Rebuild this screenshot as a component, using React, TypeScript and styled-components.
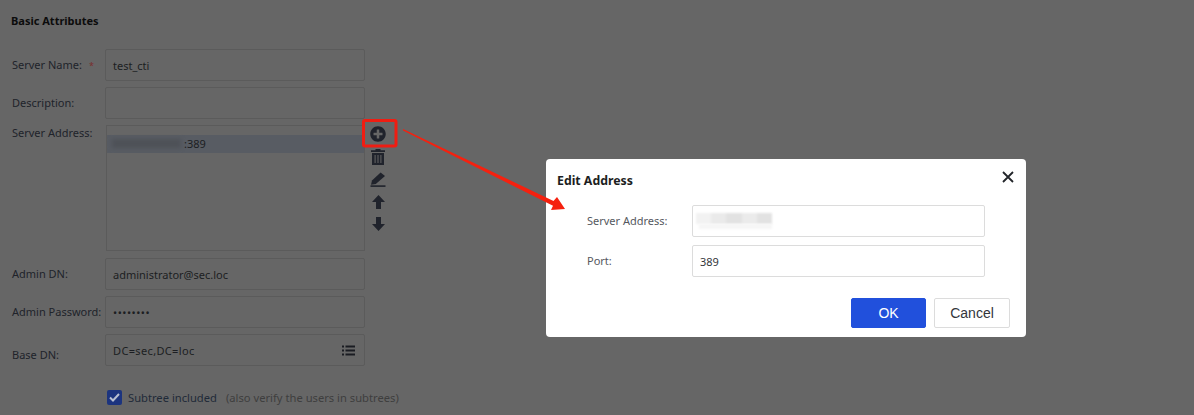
import React from 'react';
import styled, { createGlobalStyle } from 'styled-components';
import { FaPlusCircle } from 'react-icons/fa';

const GlobalStyle = createGlobalStyle`
  html, body {
    margin: 0;
    padding: 0;
    background: #666;
  }
  * {
    box-sizing: border-box;
  }
`;

const Page = styled.div`
  position: relative;
  width: 1194px;
  height: 415px;
  overflow: hidden;
  background: #666;
  color: #20232a;
  font-family: 'Noto Sans', 'Open Sans', sans-serif;
  font-size: 11px;
`;

const Form = styled.div`
  display: flex;
  flex-direction: column;
  padding: 13px 0 0 12px;
`;

const SectionTitle = styled.div`
  margin-left: -1px;
  height: 16px;
  margin-bottom: 20px;
  font-size: 11px;
  line-height: 16px;
  font-weight: 700;
  color: #0c0c0c;
`;

const Row = styled.div<{ $gap?: number }>`
  display: flex;
  margin-bottom: ${({ $gap }) => $gap ?? 6}px;
`;

const Label = styled.div<{ $offset?: number }>`
  width: 93px;
  padding-top: ${({ $offset }) => $offset ?? 8}px;
  line-height: 16px;
  white-space: nowrap;
`;

const Required = styled.span`
  margin-left: 7px;
  font-size: 9px;
  color: #7a2e2e;
`;

const Input = styled.div<{ $spacing?: number }>`
  display: flex;
  align-items: center;
  justify-content: space-between;
  width: 260px;
  height: 32px;
  padding: 0 9px 0 7px;
  border: 1px solid #5b5b5b;
  border-radius: 2px;
  color: #1c1e22;
  font-size: 11px;
  letter-spacing: ${({ $spacing }) => $spacing ?? 0}px;
`;

const ListBox = styled.div`
  width: 259px;
  height: 126px;
  margin-left: 1px;
  padding-top: 9px;
  border: 1px solid #5b5b5b;
`;

const ListItem = styled.div`
  position: relative;
  height: 18px;
  padding-left: 77px;
  background: #585c63;
  line-height: 17px;
  color: #1c1e22;
`;

const Smudge = styled.span`
  position: absolute;
  left: 5px;
  top: 4px;
  width: 69px;
  height: 9px;
  background: #4e5157;
  filter: blur(2px);
`;

const Tools = styled.div`
  display: flex;
  flex-direction: column;
  align-items: center;
  width: 16px;
  margin-left: 5px;
  margin-top: -2px;
  color: #20232c;
`;

const Tool = styled.div`
  display: flex;
  align-items: center;
  justify-content: center;
  width: 16px;
  height: 22.5px;
`;

const CheckRow = styled.div`
  display: flex;
  align-items: center;
  margin: 23px 0 0 95px;
  height: 16px;
`;

const CheckBox = styled.span`
  display: flex;
  align-items: center;
  justify-content: center;
  width: 15px;
  height: 15px;
  border-radius: 2px;
  background: #1c347f;
  color: #b9c0d2;
`;

const CheckText = styled.span`
  margin-left: 6px;
  font-size: 11.2px;
  color: #1f2a38;
`;

const Hint = styled.span`
  margin-left: 9px;
  margin-top: 1px;
  font-size: 11.2px;
  color: #3e3e3e;
`;

const Dialog = styled.div`
  position: absolute;
  left: 546px;
  top: 159px;
  width: 480px;
  height: 178px;
  padding: 12px 16px 0 11px;
  background: #fff;
  border-radius: 4px;
`;

const DialogHeader = styled.div`
  display: flex;
  align-items: center;
  justify-content: space-between;
  height: 18px;
  margin-bottom: 16px;
`;

const DialogTitle = styled.div`
  font-size: 12.3px;
  font-weight: 700;
  color: #1c1e22;
`;

const CloseIcon = styled.svg`
  margin-top: -7px;
  margin-right: -4px;
`;

const DialogRow = styled.div`
  display: flex;
  align-items: center;
  margin-bottom: 8px;
  padding-left: 30px;
`;

const DialogLabel = styled.div`
  width: 105px;
  margin-top: -1px;
  font-size: 11px;
  color: #55585e;
`;

const DialogInput = styled.div`
  position: relative;
  display: flex;
  align-items: center;
  width: 293px;
  height: 32px;
  padding-left: 7px;
  border: 1px solid #dcdcdc;
  border-radius: 2px;
  font-size: 11px;
  color: #33363b;
`;

const BlurredValue = styled.span`
  position: absolute;
  left: 3px;
  top: 7px;
  width: 76px;
  height: 11px;
  background: linear-gradient(
    90deg,
    #f2f2f2 0 20%,
    #eaeaea 20% 40%,
    #e2e2e2 40% 60%,
    #ebebeb 60% 80%,
    #e2e2e2 80% 100%
  );
  filter: blur(1px);
`;

const BlurredTail = styled.span`
  position: absolute;
  left: 6px;
  top: 18px;
  width: 73px;
  height: 5px;
  background: #f6f6f6;
  filter: blur(1px);
`;

const DialogFooter = styled.div`
  display: flex;
  justify-content: flex-end;
  gap: 8px;
  margin-top: 21px;
`;

const Button = styled.div<{ $primary?: boolean }>`
  display: flex;
  align-items: center;
  justify-content: center;
  width: ${({ $primary }) => ($primary ? 75 : 76)}px;
  height: 30px;
  border: 1px solid ${({ $primary }) => ($primary ? '#2150dc' : '#dcdcdc')};
  border-radius: 2px;
  background: ${({ $primary }) => ($primary ? '#2150dc' : '#fff')};
  color: ${({ $primary }) => ($primary ? '#fff' : '#33363b')};
  font-family: 'Liberation Sans', Arial, sans-serif;
  font-size: 14px;
`;

const Annotation = styled.svg`
  position: absolute;
  left: 0;
  top: 0;
  pointer-events: none;
`;

const TrashIcon = () => (
  <svg width="14" height="16" viewBox="0 0 14 16" fill="currentColor">
    <path d="M4.5 0 H9.5 V1.2 H14 V3 H0 V1.2 H4.5 Z" />
    <path
      fillRule="evenodd"
      d="M1 4 H13 V16 H1 Z M3.6 6 V14 H4.6 V6 Z M6.5 6 V14 H7.5 V6 Z M9.4 6 V14 H10.4 V6 Z"
    />
  </svg>
);

const PencilIcon = () => (
  <svg width="16" height="15" viewBox="0 0 16 15" fill="currentColor">
    <path d="M10.6 0.4 L15 4 L5.8 12 L1 12.8 L2 8.4 Z" />
    <rect x="0.5" y="13.3" width="15" height="1.6" />
  </svg>
);

const UpIcon = () => (
  <svg width="13" height="14" viewBox="0 0 13 14" fill="currentColor">
    <path d="M6.5 0 L13 7 H9 V14 H4 V7 H0 Z" />
  </svg>
);

const DownIcon = () => (
  <svg width="13" height="14" viewBox="0 0 13 14" fill="currentColor">
    <path d="M4 0 H9 V7 H13 L6.5 14 L0 7 H4 Z" />
  </svg>
);

const ListIcon = () => (
  <svg width="13" height="11" viewBox="0 0 13 11" fill="#1a1c22">
    <rect x="0" y="0.5" width="2" height="2" />
    <rect x="3.5" y="0.5" width="9.5" height="2" />
    <rect x="0" y="4.5" width="2" height="2" />
    <rect x="3.5" y="4.5" width="9.5" height="2" />
    <rect x="0" y="8.5" width="2" height="2" />
    <rect x="3.5" y="8.5" width="9.5" height="2" />
  </svg>
);

const App: React.FC = () => {
  return (
    <Page>
      <GlobalStyle />
      <Form>
        <SectionTitle>Basic Attributes</SectionTitle>
        <Row>
          <Label>
            Server Name:<Required>*</Required>
          </Label>
          <Input>test_cti</Input>
        </Row>
        <Row>
          <Label>Description:</Label>
          <Input />
        </Row>
        <Row $gap={7}>
          <Label $offset={0}>Server Address:</Label>
          <ListBox>
            <ListItem>
              <Smudge />
              :389
            </ListItem>
          </ListBox>
          <Tools>
            <Tool>
              <FaPlusCircle size={16} />
            </Tool>
            <Tool>
              <TrashIcon />
            </Tool>
            <Tool>
              <PencilIcon />
            </Tool>
            <Tool>
              <UpIcon />
            </Tool>
            <Tool>
              <DownIcon />
            </Tool>
          </Tools>
        </Row>
        <Row>
          <Label>Admin DN:</Label>
          <Input>administrator@sec.loc</Input>
        </Row>
        <Row>
          <Label>Admin Password:</Label>
          <Input $spacing={0.5}>••••••••</Input>
        </Row>
        <Row $gap={0}>
          <Label $offset={13}>Base DN:</Label>
          <Input $spacing={0.35}>
            DC=sec,DC=loc
            <ListIcon />
          </Input>
        </Row>
        <CheckRow>
          <CheckBox>
            <svg width="11" height="9" viewBox="0 0 11 9" fill="none">
              <path d="M1 4.5 L4 7.5 L10 1" stroke="currentColor" strokeWidth="2" />
            </svg>
          </CheckBox>
          <CheckText>Subtree included</CheckText>
          <Hint>(also verify the users in subtrees)</Hint>
        </CheckRow>
      </Form>

      <Dialog>
        <DialogHeader>
          <DialogTitle>Edit Address</DialogTitle>
          <CloseIcon width="12" height="12" viewBox="0 0 12 12">
            <path d="M1 1 L11 11 M11 1 L1 11" stroke="#22252a" strokeWidth="1.8" />
          </CloseIcon>
        </DialogHeader>
        <DialogRow>
          <DialogLabel>Server Address:</DialogLabel>
          <DialogInput>
            <BlurredValue />
            <BlurredTail />
          </DialogInput>
        </DialogRow>
        <DialogRow>
          <DialogLabel>Port:</DialogLabel>
          <DialogInput>389</DialogInput>
        </DialogRow>
        <DialogFooter>
          <Button $primary>OK</Button>
          <Button>Cancel</Button>
        </DialogFooter>
      </Dialog>

      <Annotation width="1194" height="415" viewBox="0 0 1194 415">
        <rect x="363.5" y="120.5" width="32.5" height="25.5" rx="1.5" fill="none" stroke="#f01d12" strokeWidth="3" />
        <path d="M403 129 L553.5 201 L557 197 L565 209 L551 210 L553 205.8 L403 130.5 Z" fill="#f5210f" />
      </Annotation>
    </Page>
  );
};

export default App;
